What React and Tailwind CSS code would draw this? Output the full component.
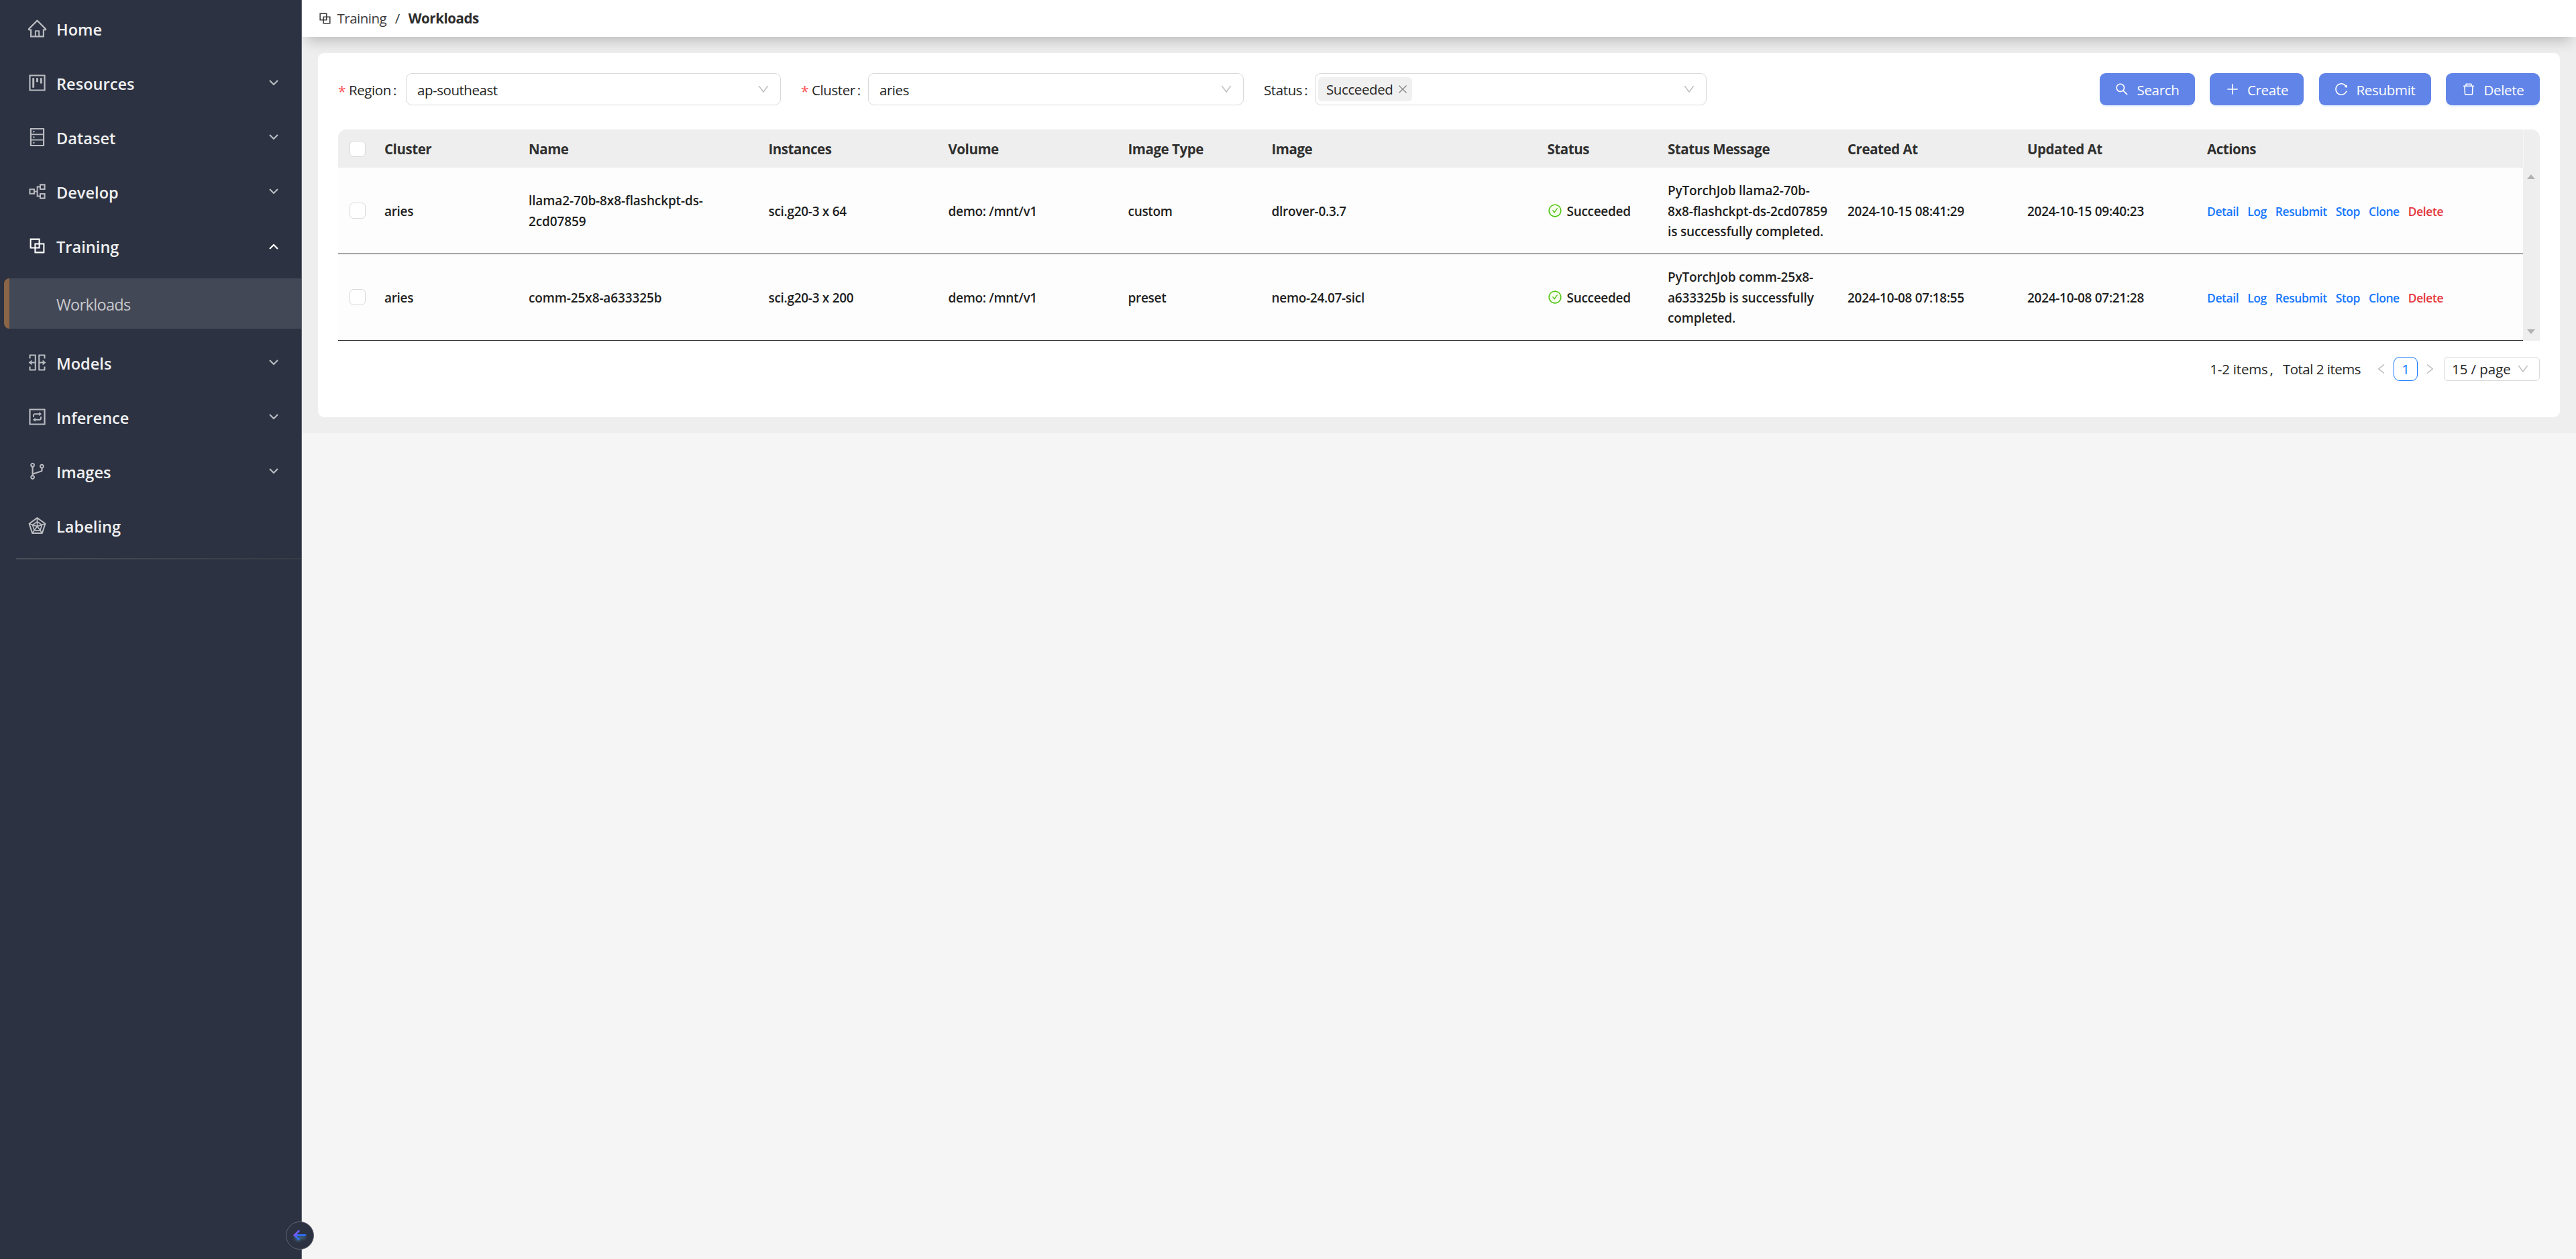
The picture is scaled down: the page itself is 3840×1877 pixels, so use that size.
import React, { useState } from "react";
import {
  AiOutlineHome,
  AiOutlineProject,
  AiOutlineDatabase,
  AiOutlinePartition,
  AiOutlineBlock,
  AiOutlineSplitCells,
  AiOutlineInteraction,
  AiOutlineBranches,
  AiOutlineRadarChart,
  AiOutlineSearch,
  AiOutlinePlus,
  AiOutlineReload,
  AiOutlineDelete,
  AiOutlineDown,
  AiOutlineLeft,
  AiOutlineRight,
  AiOutlineClose,
  AiOutlineCheckCircle,
} from "react-icons/ai";

const topMenu = [
  { label: "Home", icon: AiOutlineHome },
  { label: "Resources", icon: AiOutlineProject, expandable: true },
  { label: "Dataset", icon: AiOutlineDatabase, expandable: true },
  { label: "Develop", icon: AiOutlinePartition, expandable: true },
  { label: "Training", icon: AiOutlineBlock, expandable: true, open: true },
];

const bottomMenu = [
  { label: "Models", icon: AiOutlineSplitCells, expandable: true },
  { label: "Inference", icon: AiOutlineInteraction, expandable: true },
  { label: "Images", icon: AiOutlineBranches, expandable: true },
  { label: "Labeling", icon: AiOutlineRadarChart },
];

const columns = [
  "Cluster",
  "Name",
  "Instances",
  "Volume",
  "Image Type",
  "Image",
  "Status",
  "Status Message",
  "Created At",
  "Updated At",
  "Actions",
];

const workloads = [
  {
    cluster: "aries",
    name: ["llama2-70b-8x8-flashckpt-ds-", "2cd07859"],
    instances: "sci.g20-3 x 64",
    volume: "demo: /mnt/v1",
    imageType: "custom",
    image: "dlrover-0.3.7",
    status: "Succeeded",
    message: [
      "PyTorchJob llama2-70b-",
      "8x8-flashckpt-ds-2cd07859",
      "is successfully completed.",
    ],
    createdAt: "2024-10-15 08:41:29",
    updatedAt: "2024-10-15 09:40:23",
  },
  {
    cluster: "aries",
    name: ["comm-25x8-a633325b"],
    instances: "sci.g20-3 x 200",
    volume: "demo: /mnt/v1",
    imageType: "preset",
    image: "nemo-24.07-sicl",
    status: "Succeeded",
    message: [
      "PyTorchJob comm-25x8-",
      "a633325b is successfully",
      "completed.",
    ],
    createdAt: "2024-10-08 07:18:55",
    updatedAt: "2024-10-08 07:21:28",
  },
];

const rowGrid =
  "grid grid-cols-[57.5px_215px_357.5px_268px_268px_214px_411px_179.5px_268px_268px_268px_482px] items-center";

const MenuItem = ({ label, icon: Icon, expandable, open }) => (
  <div className="mb-[6px] flex h-[75px] items-center pl-[40px] pr-[34px]">
    <Icon
      className={`-mt-[3px] size-[31px] shrink-0 ${open ? "text-white" : "text-[#b9bbc1]"}`}
    />
    <span className="ml-[13px] flex-1 text-[23.5px] font-semibold leading-[36px] tracking-[0.05px] text-[#f0f0f1]">
      {label}
    </span>
    {expandable && (
      <svg
        viewBox="0 0 14 9"
        className={`h-[9px] w-[14px] ${open ? "rotate-180 text-white" : "-mt-[3px] text-[#b9bbc1]"}`}
        fill="none"
        stroke="currentColor"
        strokeWidth="2.2"
      >
        <path d="M1 1l6 6 6-6" />
      </svg>
    )}
  </div>
);

const Sidebar = () => (
  <aside className="relative z-20 w-[450px] shrink-0 border-r border-[#5a606c] bg-[#2c3241] pt-[6px]">
    {topMenu.map((item) => (
      <MenuItem key={item.label} {...item} />
    ))}
    <div className="mb-[14px] ml-[6px] mt-[10px] flex h-[75px] items-center rounded-l-[8px] border-l-8 border-[#8b6547] bg-[#434856] pl-[70px] pt-[2px]">
      <span className="text-[23.5px] leading-[36px] tracking-[-0.65px] text-[#c8c9cd]">
        Workloads
      </span>
    </div>
    {bottomMenu.map((item) => (
      <MenuItem key={item.label} {...item} />
    ))}
    <div className="ml-[24px] mt-[10px] h-[2px] bg-linear-to-r from-[#4a4f5b] to-[#373c45]" />
    <button className="absolute bottom-[14px] left-[426px] flex size-[42px] items-center justify-center rounded-full border border-[#5f6470] bg-[#2c3241]">
      <svg viewBox="0 0 24 24" className="size-[24px]" fill="none">
        <defs>
          <linearGradient id="arrow" x1="0" y1="0" x2="1" y2="0.6">
            <stop offset="0.1" stopColor="#9b51f5" />
            <stop offset="0.5" stopColor="#2f6bf2" />
          </linearGradient>
          <filter id="glow" x="-50%" y="-50%" width="200%" height="200%">
            <feGaussianBlur stdDeviation="2" />
          </filter>
        </defs>
        <path
          d="M20 15H5m6 5l-6-6"
          stroke="#4b86a8"
          strokeOpacity="0.8"
          strokeWidth="3.5"
          filter="url(#glow)"
        />
        <path
          d="M20 11.5H4.5M10.5 5.2L4 11.500l6.500 6.300"
          stroke="url(#arrow)"
          strokeWidth="2.8"
          strokeLinecap="round"
        />
      </svg>
    </button>
  </aside>
);

const Header = () => (
  <header className="relative z-10 flex h-[55px] items-center bg-white pl-[23px] text-[20.5px] leading-[33px] text-[#3a3a3a] shadow-[0_14px_20px_-8px_rgba(0,0,0,0.22)]">
    <AiOutlineBlock className="size-[23px]" />
    <span className="ml-[6.5px] tracking-[-0.5px]">Training</span>
    <span className="mx-[12.5px]">/</span>
    <span className="font-bold tracking-[-0.45px] text-[#2c2c2c]">
      Workloads
    </span>
  </header>
);

const Field = ({ label, required, labelWidth, children }) => (
  <div className="flex w-[660px] items-center">
    <div className={`flex shrink-0 items-center ${labelWidth}`}>
      {required && (
        <span className="mr-[5px] w-[11px] pt-[6px] text-[21px] leading-none text-[#ff4d4f]">
          *
        </span>
      )}
      <span className="pt-[2px] tracking-[-0.4px]">{label}</span>
      <span className="ml-[3px] pt-[2px]">:</span>
    </div>
    <div className="flex h-[48px] flex-1 items-center justify-between rounded-[9px] border border-[#d9d9d9] pr-[15px]">
      {children}
      <AiOutlineDown className="size-[20px] text-[#bfbfbf]" />
    </div>
  </div>
);

const ToolButton = ({ icon: Icon, className, children }) => (
  <button
    className={`flex h-[48px] items-center justify-center gap-[11px] rounded-[9px] bg-[#6184e8] text-white shadow-[0_3px_0_rgba(5,100,255,0.06)] ${className}`}
  >
    <Icon className="size-[22px]" />
    <span className="pt-[2px] tracking-[-0.3px]">{children}</span>
  </button>
);

const Checkbox = () => (
  <div className="ml-[17px] size-[24px] rounded-[6px] border border-[#d9d9d9] bg-white" />
);

const Cell = ({ className = "", children }) => (
  <div className={`whitespace-nowrap pl-[11.5px] pt-[2px] ${className}`}>
    {children}
  </div>
);

const Lines = ({ lines }) => (
  <>
    {lines.map((line) => (
      <div key={line}>{line}</div>
    ))}
  </>
);

const Actions = () => (
  <div className="flex gap-[13px] text-[17.5px] tracking-[-0.43px] text-[#1677ff]">
    <a>Detail</a>
    <a>Log</a>
    <a>Resubmit</a>
    <a>Stop</a>
    <a>Clone</a>
    <a className="text-[#e5353e]">Delete</a>
  </div>
);

const WorkloadTable = () => (
  <div className="mt-[36px] overflow-hidden rounded-t-[12px]">
    <div className="flex bg-[#eeeeee]">
      <div
        className={`${rowGrid} h-[57px] border-r border-[#f6f6f6] text-[20.5px] font-bold tracking-[-0.45px] text-[#303030]`}
      >
        <Checkbox />
        {columns.map((column) => (
          <Cell key={column}>{column}</Cell>
        ))}
      </div>
    </div>
    <div className="flex">
      <div className="bg-[#fdfdfd] text-[19px] font-semibold leading-[30.64px] tracking-[-0.3px] text-[#1f1f1f]">
        {workloads.map((row) => (
          <div
            key={row.createdAt}
            className={`${rowGrid} h-[129px] border-b border-[#303030]`}
          >
            <Checkbox />
            <Cell>{row.cluster}</Cell>
            <Cell className="tracking-[-0.12px]">
              <Lines lines={row.name} />
            </Cell>
            <Cell>{row.instances}</Cell>
            <Cell>{row.volume}</Cell>
            <Cell>{row.imageType}</Cell>
            <Cell>{row.image}</Cell>
            <Cell>
              <div className="flex items-center gap-[7px]">
                <AiOutlineCheckCircle className="-mt-[2px] size-[22px] rounded-full bg-[#f6ffed] text-[#52c41a]" />
                {row.status}
              </div>
            </Cell>
            <Cell className="tracking-[-0.17px]">
              <Lines lines={row.message} />
            </Cell>
            <Cell>{row.createdAt}</Cell>
            <Cell>{row.updatedAt}</Cell>
            <Cell>
              <Actions />
            </Cell>
          </div>
        ))}
      </div>
      <div className="flex w-[25px] flex-col items-center justify-between bg-[#eeeeee] pb-[10px] pt-[10px] text-[#b2b2b2]">
        <svg viewBox="0 0 12 7" className="h-[7px] w-[12px]" fill="currentColor">
          <path d="M0 7l6-7 6 7z" />
        </svg>
        <svg viewBox="0 0 12 7" className="h-[7px] w-[12px]" fill="currentColor">
          <path d="M0 0l6 7 6-7z" />
        </svg>
      </div>
    </div>
  </div>
);

const Pagination = ({ page }) => (
  <div className="mt-[24px] flex h-[36px] items-center justify-end">
    <span className="pt-[1px] tracking-[-0.2px]">1-2 items</span>
    <span className="ml-[3px] mr-[14px] pt-[1px]">,</span>
    <span className="mr-[21px] pt-[1px] tracking-[-0.5px]">Total 2 items</span>
    <AiOutlineLeft className="size-[20px] text-[#bfbfbf]" />
    <div className="mx-[8px] flex size-[36px] items-center justify-center rounded-[9px] border border-[#1677ff] text-[#1677ff]">
      {page}
    </div>
    <AiOutlineRight className="size-[20px] text-[#bfbfbf]" />
    <div className="ml-[11px] flex h-[36px] w-[143px] items-center justify-between rounded-[6px] border border-[#d9d9d9] pl-[11px] pr-[14px]">
      <span className="tracking-[-0.05px]">15 / page</span>
      <AiOutlineDown className="size-[20px] text-[#bfbfbf]" />
    </div>
  </div>
);

const App = () => {
  const [page] = useState(1);

  return (
    <div className="flex h-[1877px] w-[3840px] overflow-hidden bg-[#f5f5f5] font-['Open_Sans',sans-serif]">
      <Sidebar />
      <div className="flex-1">
        <Header />
        <main className="h-[591px] bg-[#eeeeee] p-[24px]">
          <div className="h-[543px] rounded-[9px] bg-white p-[30px] text-[20.5px] leading-[33px] text-[#262626]">
            <div className="flex items-center justify-between">
              <div className="flex gap-[30px]">
                <Field label="Region" labelWidth="w-[101px]" required>
                  <span className="pl-[16px] pt-[2px] tracking-[-0.45px]">
                    ap-southeast
                  </span>
                </Field>
                <Field label="Cluster" labelWidth="w-[100px]" required>
                  <span className="pl-[16px] pt-[2px] tracking-[-0.45px]">
                    aries
                  </span>
                </Field>
                <Field label="Status" labelWidth="w-[76px]">
                  <div className="ml-[4px] flex h-[36px] items-center gap-[6px] rounded-[6px] bg-[#f0f0f0] pl-[12px] pr-[5px]">
                    <span className="tracking-[-0.4px]">Succeeded</span>
                    <AiOutlineClose className="size-[18px] text-[#8a8a8a]" />
                  </div>
                </Field>
              </div>
              <div className="flex gap-[22.5px]">
                <ToolButton icon={AiOutlineSearch} className="w-[142px]">
                  Search
                </ToolButton>
                <ToolButton icon={AiOutlinePlus} className="w-[140px]">
                  Create
                </ToolButton>
                <ToolButton icon={AiOutlineReload} className="w-[167px]">
                  Resubmit
                </ToolButton>
                <ToolButton icon={AiOutlineDelete} className="w-[140px]">
                  Delete
                </ToolButton>
              </div>
            </div>
            <WorkloadTable />
            <Pagination page={page} />
          </div>
        </main>
      </div>
    </div>
  );
};

export default App;
